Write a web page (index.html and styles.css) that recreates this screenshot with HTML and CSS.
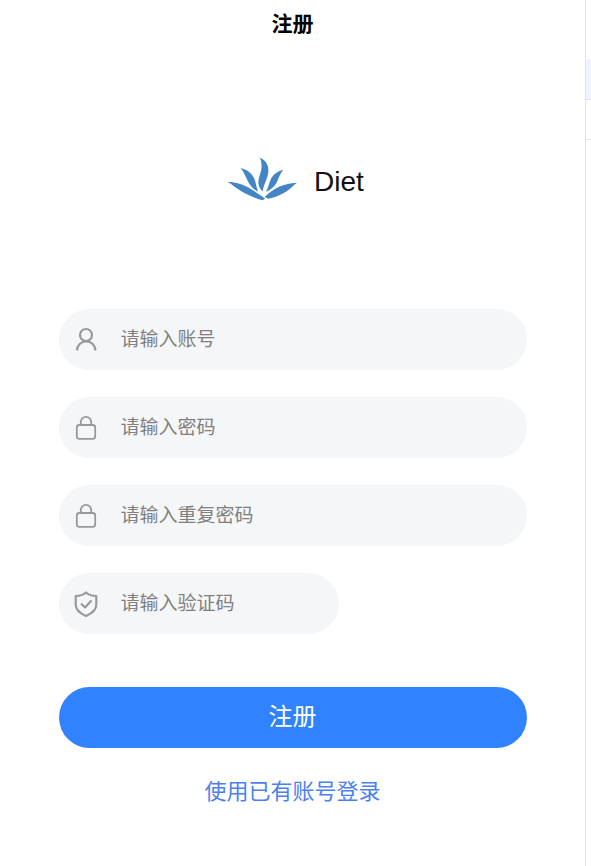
FILE: index.html
```html
<!DOCTYPE html>
<html lang="zh-CN">
<head>
<meta charset="utf-8">
<meta name="viewport" content="width=device-width, initial-scale=1">
<title>注册</title>
<link rel="stylesheet" href="styles.css">
</head>
<body>
<div class="layout">
  <div class="page">
    <header class="navbar"><h1 class="navbar-title">注册</h1></header>
    <main class="content">
      <div class="brand">
        <svg class="brand-logo" viewBox="0 0 240 168" aria-hidden="true">
          <path d="M117 23C134 29 144 46 142 66C140 86 129 100 125 124C116 118 110 104 113 88C117 70 128 52 117 23Z"/>
          <path d="M59 54C78 59 92 69 99 84C105 98 105 108 111 125C99 118 90 110 83 98C75 84 71 69 59 54Z"/>
          <path d="M187 59C170 63 158 72 151 84C144 98 143 111 135 126C148 120 160 111 166 100C173 86 175 74 187 59Z"/>
          <path d="M19 95C41 96 60 101 78 110C98 121 114 133 133 146L124 151C101 144 78 134 60 123C43 113 34 103 19 95Z"/>
          <path d="M228 98C206 99 188 104 171 112C156 120 144 129 131 141L142 146C163 142 179 135 194 126C208 117 215 107 228 98Z"/>
        </svg>
        <span class="brand-name">Diet</span>
      </div>
      <form class="form">
        <label class="field">
          <svg class="icon" viewBox="0 0 28 28" aria-hidden="true"><circle cx="14" cy="9" r="6"/><path d="M5 24.500a9.200 9.200 0 0 1 18.400 0"/></svg>
          <input class="input" type="text" placeholder="请输入账号" aria-label="账号">
        </label>
        <label class="field">
          <svg class="icon icon-lock" viewBox="0 0 28 28" aria-hidden="true"><rect x="4.800" y="11" width="18.400" height="13.800" rx="2.500"/><path d="M8.800 11V8a5.200 5.200 0 0 1 10.400 0v3"/></svg>
          <input class="input" type="password" placeholder="请输入密码" aria-label="密码">
        </label>
        <label class="field">
          <svg class="icon icon-lock" viewBox="0 0 28 28" aria-hidden="true"><rect x="4.800" y="11" width="18.400" height="13.800" rx="2.500"/><path d="M8.800 11V8a5.200 5.200 0 0 1 10.400 0v3"/></svg>
          <input class="input" type="password" placeholder="请输入重复密码" aria-label="重复密码">
        </label>
        <label class="field field-code">
          <svg class="icon" viewBox="0 0 28 28" aria-hidden="true"><path d="M14 2.500C11 5 7.500 6 3.700 6v8.500c0 5 4.500 9 10.300 11.500 5.800-2.500 10.300-6.500 10.300-11.500V6C20.500 6 17 5 14 2.500Z"/><path d="M9 13.500l4 4 6.500-7"/></svg>
          <input class="input" type="text" placeholder="请输入验证码" aria-label="验证码">
        </label>
        <button class="submit" type="submit">注册</button>
      </form>
      <a class="login-link" href="#">使用已有账号登录</a>
    </main>
  </div>
  <aside class="side">
    <div class="side-head"></div>
    <div class="side-row side-row-active"></div>
    <div class="side-row"></div>
  </aside>
</div>
</body>
</html>
```

FILE: styles.css
```css
* {
  box-sizing: border-box;
}

body {
  margin: 0;
  background: #fff;
  font-family: "Liberation Sans", "Noto Sans CJK SC", sans-serif;
}

.layout {
  display: flex;
  min-height: 100vh;
}

.page {
  flex: 1;
  min-width: 0;
}

.navbar {
  display: flex;
  align-items: center;
  justify-content: center;
  height: 48px;
}

.navbar-title {
  margin: 0;
  color: #000;
  font-size: 21px;
  line-height: 30px;
}

.content {
  display: flex;
  flex-direction: column;
  align-items: center;
  padding: 102px 10% 0;
}

.brand {
  display: flex;
  align-items: center;
  gap: 13px;
  margin-bottom: 103px;
}

.brand-logo {
  width: 80px;
  height: 56px;
  fill: #4485c5;
}

.brand-name {
  padding-top: 8px;
  color: #111;
  font-size: 28px;
  line-height: 32px;
}

.form {
  display: flex;
  flex-direction: column;
  gap: 27px;
  width: 100%;
}

.field {
  display: flex;
  align-items: center;
  gap: 21px;
  height: 61px;
  padding: 0 16px 0 13px;
  border-radius: 31px;
  background: #f4f6f8;
}

.field-code {
  width: 60%;
}

.icon {
  flex: none;
  width: 28px;
  height: 28px;
  fill: none;
  stroke: #999;
  stroke-width: 2.2;
  stroke-linejoin: round;
}

.icon-lock {
  stroke-width: 1.8;
}

.input {
  flex: 1;
  min-width: 0;
  padding: 0;
  border: 0;
  outline: 0;
  background: transparent;
  color: #333;
  font-family: inherit;
  font-size: 19px;
  line-height: 28px;
}

.input::placeholder {
  color: #808080;
  opacity: 1;
}

.submit {
  height: 61px;
  margin-top: 26px;
  padding: 0 0 6px;
  border: 0;
  border-radius: 31px;
  background: #3082ff;
  color: #fff;
  font-family: inherit;
  font-size: 24px;
  cursor: pointer;
}

.login-link {
  margin-top: 28px;
  color: #4c7ff0;
  font-size: 22px;
  line-height: 32px;
  text-decoration: none;
}

.side {
  width: 6px;
  border-left: 1px solid #dde0fa;
}

.side-head {
  height: 59px;
}

.side-row {
  height: 40px;
  border-bottom: 1px solid #dfe1f6;
}

.side-row-active {
  height: 41px;
  background: #f0f3fc;
}
```
